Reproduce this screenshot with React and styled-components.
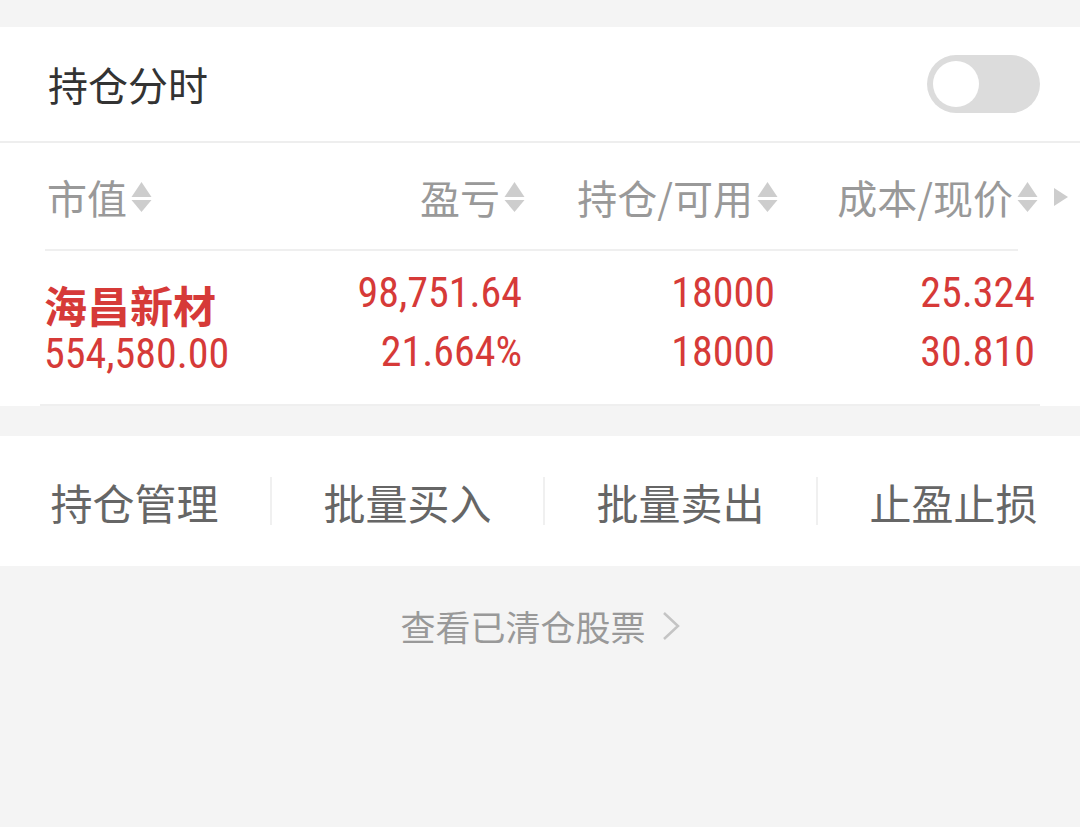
import * as React from "react"
import styled, { createGlobalStyle } from "styled-components"

const GlobalStyle = createGlobalStyle`
  * { box-sizing: border-box; }
  html, body { margin: 0; padding: 0; }
  body {
    background: #f4f4f4;
    font-family: "Noto Sans CJK SC", "Noto Sans", sans-serif;
    overflow-x: hidden;
  }
`

const RED = "#d63a38"
const NUM_FONT = `"Roboto Condensed", Roboto, "Noto Sans CJK SC", sans-serif`

const Page = styled.div`
  min-height: 100vh;
  background: #f4f4f4;
  padding-top: 27px;
  overflow: hidden;
`

const Card = styled.section`
  background: #fff;
`

const TitleBar = styled.div`
  height: 116px;
  display: flex;
  align-items: center;
  justify-content: space-between;
  padding: 0 40px 0 48px;
  border-bottom: 2px solid #eeeeee;
`

const Title = styled.div`
  font-size: 40px;
  color: #333;
`

const Toggle = styled.div`
  width: 113px;
  height: 58px;
  border-radius: 29px;
  background: #dcdcdc;
  padding: 6px;
  display: flex;
  align-items: center;
`

const Knob = styled.div`
  width: 46px;
  height: 46px;
  border-radius: 50%;
  background: #fff;
`

const Grid = styled.div`
  display: grid;
  grid-template-columns: 226px 252px 253px 260px 1fr;
  padding-left: 44px;
`

const HeadRow = styled(Grid)`
  height: 108px;
  align-items: center;
  position: relative;
  &::after {
    content: "";
    position: absolute;
    left: 45px;
    right: 62px;
    bottom: 0;
    height: 2px;
    background: #efefef;
  }
`

const HeadCell = styled.div`
  display: flex;
  align-items: center;
  justify-content: ${(p) => (p.$left ? "flex-start" : "flex-end")};
  margin-right: ${(p) => (p.$left ? "0" : "-3px")};
  font-size: 40px;
  color: #999;
  line-height: 1;
  padding-left: ${(p) => (p.$left ? "3px" : "0")};
`

const More = styled.div`
  display: flex;
  justify-content: flex-end;
  padding-right: 12px;
`

const DataRow = styled(Grid)`
  padding-top: 12px;
  height: 155px;
  position: relative;
  &::after {
    content: "";
    position: absolute;
    left: 40px;
    right: 40px;
    bottom: 0;
    height: 2px;
    background: #efefef;
  }
`

const Cell = styled.div`
  display: flex;
  flex-direction: column;
  align-items: ${(p) => (p.$left ? "flex-start" : "flex-end")};
  color: ${RED};
  padding-top: ${(p) => (p.$left ? "15px" : "0")};
`

const Name = styled.div`
  font-size: 43px;
  font-weight: 700;
  line-height: 52px;
  margin-bottom: 2px;
`

const Num = styled.div`
  font-family: ${NUM_FONT};
  font-size: 42px;
  line-height: ${(p) => (p.$tight ? "44px" : "59px")};
`

const Actions = styled.section`
  margin-top: 30px;
  margin-left: -2px;
  background: #fff;
  height: 130px;
  display: grid;
  grid-template-columns: repeat(4, 273px);
  align-items: center;
`

const Action = styled.div`
  position: relative;
  text-align: center;
  font-size: 42px;
  color: #666;
  &:not(:last-child)::after {
    content: "";
    position: absolute;
    right: -1px;
    top: 50%;
    margin-top: -24px;
    width: 2px;
    height: 48px;
    background: #f0f0f0;
  }
`

const Footer = styled.div`
  display: flex;
  justify-content: center;
  align-items: center;
  gap: 16px;
  padding-top: 38px;
  font-size: 35px;
  line-height: 44px;
  color: #999;
`

function SortIcon() {
  return (
    <svg width="21" height="32" viewBox="0 0 21 32" style={{ marginLeft: 4 }}>
      <path d="M10.5 1 L20.5 16 H0.5 Z" fill="#cdcdcd" />
      <path d="M0.5 19 H20.5 L10.5 31 Z" fill="#cdcdcd" />
    </svg>
  )
}

function App() {
  return (
    <Page>
      <GlobalStyle />
      <Card>
        <TitleBar>
          <Title>持仓分时</Title>
          <Toggle>
            <Knob />
          </Toggle>
        </TitleBar>
        <HeadRow>
          <HeadCell $left>
            市值
            <SortIcon />
          </HeadCell>
          <HeadCell>
            盈亏
            <SortIcon />
          </HeadCell>
          <HeadCell>
            持仓/可用
            <SortIcon />
          </HeadCell>
          <HeadCell>
            成本/现价
            <SortIcon />
          </HeadCell>
          <More>
            <svg width="14" height="18" viewBox="0 0 14 18">
              <path d="M0 0 L14 9 L0 18 Z" fill="#cdcdcd" />
            </svg>
          </More>
        </HeadRow>
        <DataRow>
          <Cell $left>
            <Name>海昌新材</Name>
            <Num $tight>554,580.00</Num>
          </Cell>
          <Cell>
            <Num>98,751.64</Num>
            <Num>21.664%</Num>
          </Cell>
          <Cell>
            <Num>18000</Num>
            <Num>18000</Num>
          </Cell>
          <Cell>
            <Num>25.324</Num>
            <Num>30.810</Num>
          </Cell>
        </DataRow>
      </Card>
      <Actions>
        <Action>持仓管理</Action>
        <Action>批量买入</Action>
        <Action>批量卖出</Action>
        <Action>止盈止损</Action>
      </Actions>
      <Footer>
        查看已清仓股票
        <svg width="18" height="30" viewBox="0 0 18 30">
          <path d="M2 2 L16 15 L2 28" fill="none" stroke="#c4c4c4" strokeWidth="2.5" />
        </svg>
      </Footer>
    </Page>
  )
}

export default App
